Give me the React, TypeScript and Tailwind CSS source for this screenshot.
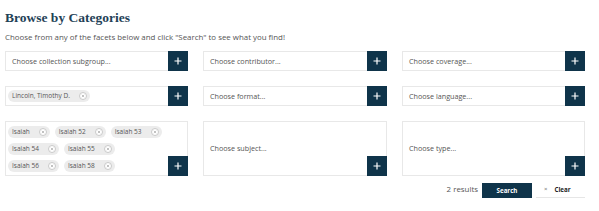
import React from "react";

const Plus = () => (
  <div className="w-[20px] h-[20px] shrink-0 self-end -mr-px -mb-px bg-[#0f344a] flex items-center justify-center">
    <svg width="8" height="8" viewBox="0 0 8 8">
      <path d="M4 0.5V7.5M0.5 4H7.5" stroke="white" strokeWidth="1.2" />
    </svg>
  </div>
);

const Chip = ({ label }: { label: string }) => (
  <div className="h-[12px] rounded-full bg-[#ececec] flex items-center pl-[4px] pr-[3px] gap-[9px]">
    <span className="text-[6.5px] leading-none text-[#555]">{label}</span>
    <span className="w-[8px] h-[8px] rounded-full bg-white border border-[#c9c9c9] flex items-center justify-center">
      <svg width="4" height="4" viewBox="0 0 4 4">
        <path d="M0.8 0.8L3.2 3.2M3.2 0.8L0.8 3.2" stroke="#999" strokeWidth="0.6" />
      </svg>
    </span>
  </div>
);

const Field = ({ text }: { text: string }) => (
  <div className="flex border border-[#e8e8e8] bg-white h-full">
    <div className="flex-1 flex items-center pl-[6px] text-[7.2px] text-[#555]">{text}</div>
    <Plus />
  </div>
);

export default function App() {
  return (
    <div className="w-[599px] h-[211px] bg-white pl-[5px] pt-[7px]" style={{ fontFamily: '"Open Sans", sans-serif' }}>
      <h1
        className="text-[13.5px] font-bold leading-none text-[#1f4257] pt-[4px]"
        style={{ fontFamily: '"Liberation Serif", serif' }}
      >
        Browse by Categories
      </h1>
      <p className="text-[7.9px] text-[#555] mt-[9.5px] leading-none">
        Choose from any of the facets below and click "Search" to see what you find!
      </p>
      <div className="w-[580px] grid grid-cols-[183px_184px_183px] grid-rows-[20px_20px_55px] gap-x-[15px] gap-y-[15px] mt-[9px]">
        <Field text="Choose collection subgroup..." />
        <Field text="Choose contributor..." />
        <Field text="Choose coverage..." />

        <div className="flex border border-[#e8e8e8] bg-white h-full">
          <div className="flex-1 flex items-center pl-[2px]">
            <Chip label="Lincoln, Timothy D." />
          </div>
          <Plus />
        </div>
        <Field text="Choose format..." />
        <Field text="Choose language..." />

        <div className="flex border border-[#e8e8e8] bg-white h-full">
          <div className="flex-1 flex flex-col gap-y-[5px] pl-[2px] pt-[4px]">
            <div className="flex gap-x-[5px]">
              <Chip label="Isaiah" />
              <Chip label="Isaiah 52" />
              <Chip label="Isaiah 53" />
            </div>
            <div className="flex gap-x-[5px]">
              <Chip label="Isaiah 54" />
              <Chip label="Isaiah 55" />
            </div>
            <div className="flex gap-x-[5px]">
              <Chip label="Isaiah 56" />
              <Chip label="Isaiah 58" />
            </div>
          </div>
          <Plus />
        </div>
        <Field text="Choose subject..." />
        <Field text="Choose type..." />
      </div>
      <div className="w-[580px] flex justify-end items-center mt-[7px]">
        <span className="text-[7.9px] text-[#555] mr-[4px]">2 results</span>
        <div className="w-[50px] h-[15px] bg-[#0f344a] text-white text-[6.2px] font-bold flex items-center justify-center">
          Search
        </div>
        <div className="w-[49px] h-[15px] ml-[4px] bg-white border-b border-[#e6e6e6] flex items-center pl-[8px] gap-[7px] text-[6.2px] font-bold text-[#222]">
          <span className="text-[#666] font-normal text-[6px]">×</span>
          <span>Clear</span>
        </div>
      </div>
    </div>
  );
}
